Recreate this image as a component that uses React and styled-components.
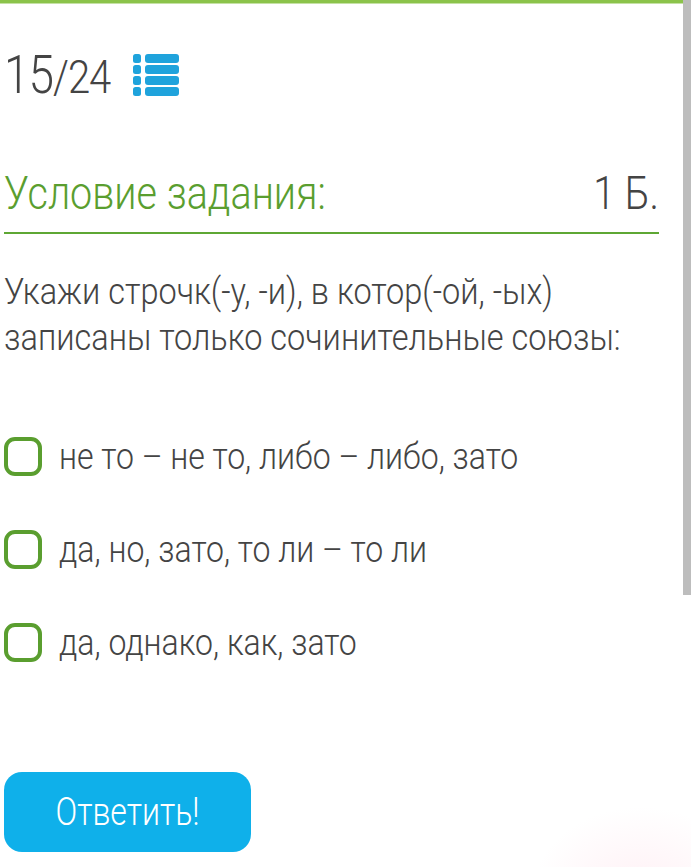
import React from "react";
import styled, { createGlobalStyle } from "styled-components";

const Global = createGlobalStyle`
  html, body { margin: 0; padding: 0; background: #fff; }
  body { font-family: Roboto, "Noto Sans", sans-serif; font-weight: 300; color: #444; }
  * { box-sizing: border-box; }
`;

const Page = styled.div`
  position: relative;
  width: 691px;
  height: 867px;
  overflow: hidden;
  background: #fff;
`;

const TopBar = styled.div`
  height: 4px;
  background: #8bc34a;
  border-bottom: 1px solid #c5e1a5;
`;

const Scrollbar = styled.div`
  position: absolute;
  right: 0;
  top: 0;
  width: 8px;
  height: 595px;
  background: #bdbdbd;
`;

const Glow = styled.div`
  position: absolute;
  right: -60px;
  bottom: -120px;
  width: 220px;
  height: 180px;
  border-radius: 50%;
  background: radial-gradient(closest-side, rgba(255, 222, 232, 0.45), rgba(255, 240, 245, 0));
`;

const Content = styled.div`
  padding: 0 32px 0 4px;
  display: flex;
  flex-direction: column;
`;

const Counter = styled.div`
  display: flex;
  align-items: center;
  gap: 23px;
  margin-top: 41px;
  height: 60px;
`;

const CounterText = styled.div`
  font-size: 46px;
  line-height: 1;
  color: #444;
  letter-spacing: -1px;
  transform: scaleY(1.15);
`;

const Small = styled.span`
  font-size: 40px;
`;

const Header = styled.div`
  display: flex;
  justify-content: space-between;
  align-items: center;
  margin-top: 65px;
  padding: 0 0 14px 0;
  border-bottom: 2px solid #5ea734;
`;

const Title = styled.div`
  font-size: 39.5px;
  color: #5a9e2f;
  line-height: 48px;
  transform: scaleY(1.15);
`;

const Points = styled.div`
  font-size: 39.5px;
  color: #444;
  line-height: 48px;
  transform: scaleY(1.15);
`;

const Question = styled.div`
  margin-top: 34px;
  font-size: 32.5px;
  line-height: 46px;
  color: #444;
`;

const Line = styled.div`
  transform: scaleY(1.15);
`;

const Options = styled.div`
  display: flex;
  flex-direction: column;
  gap: 49px;
  margin-top: 74px;
`;

const Option = styled.label`
  display: flex;
  align-items: center;
  gap: 17px;
  font-size: 32px;
  line-height: 44px;
  color: #444;
`;

const OptionText = styled.span`
  display: inline-block;
  transform: scaleY(1.15);
`;

const Box = styled.span`
  width: 38px;
  height: 39px;
  flex: none;
  border: 4px solid #5a9e2f;
  border-radius: 11px;
`;

const Button = styled.button`
  margin-top: 108px;
  width: 247px;
  height: 80px;
  border: none;
  border-radius: 18px;
  background: #0fb0ea;
  color: #fff;
  font-family: Roboto, sans-serif;
  font-weight: 300;
  font-size: 32px;
  align-self: flex-start;
  padding: 0;
`;

const ButtonLabel = styled.span`
  display: inline-block;
  transform: scaleY(1.2);
`;

function ListIcon() {
  return (
    <svg width="46" height="42" viewBox="0 0 46 42">
      {[0, 1, 2, 3].map((i) => (
        <g key={i} fill="#1fa3dc">
          <rect x="0" y={i * 11} width="8" height="9" rx="2.5" />
          <rect x="12" y={i * 11} width="34" height="9" rx="3" />
        </g>
      ))}
    </svg>
  );
}

const options = [
  "не то – не то, либо – либо, зато",
  "да, но, зато, то ли – то ли",
  "да, однако, как, зато",
];

export default function App() {
  return (
    <Page>
      <Global />
      <TopBar />
      <Content>
        <Counter>
          <CounterText>
            15<Small>/24</Small>
          </CounterText>
          <ListIcon />
        </Counter>
        <Header>
          <Title>Условие задания:</Title>
          <Points>1 Б.</Points>
        </Header>
        <Question>
          <Line>Укажи строчк(-у, -и), в котор(-ой, -ых)</Line>
          <Line>записаны только сочинительные союзы:</Line>
        </Question>
        <Options>
          {options.map((o) => (
            <Option key={o}>
              <Box />
              <OptionText>{o}</OptionText>
            </Option>
          ))}
        </Options>
        <Button>
          <ButtonLabel>Ответить!</ButtonLabel>
        </Button>
      </Content>
      <Scrollbar />
      <Glow />
    </Page>
  );
}
